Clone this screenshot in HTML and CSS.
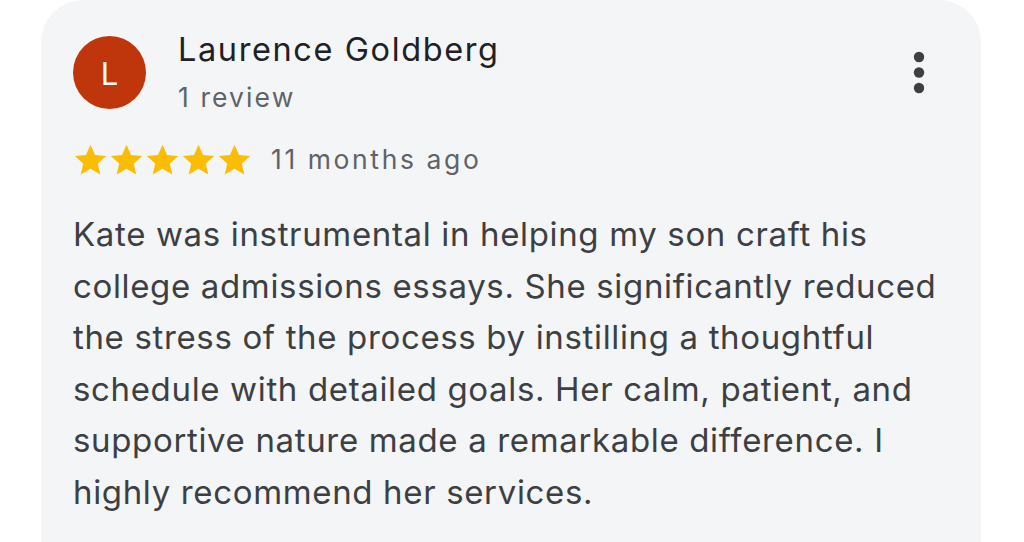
FILE: index.html
```html
<!DOCTYPE html>
<html>
<head>
<meta charset="utf-8">
<link rel="stylesheet" href="styles.css">
</head>
<body>
<div class="card">
  <div class="head">
    <div class="avatar">L</div>
    <div class="who">
      <div class="name">Laurence Goldberg</div>
      <div class="count">1 review</div>
    </div>
    <svg class="more" width="12" height="44" viewBox="0 0 12 44"><circle cx="6" cy="6" r="5.2" fill="#3c4043"/><circle cx="6" cy="21.5" r="5.2" fill="#3c4043"/><circle cx="6" cy="37" r="5.2" fill="#3c4043"/></svg>
  </div>
  <div class="rating">
    <div class="stars">
      <svg viewBox="0 0 24 24"><path d="M12 1.8l3.1 7.1 7.7.7-5.8 5.1 1.7 7.6L12 18.3l-6.7 4 1.7-7.6-5.8-5.1 7.7-.7z" fill="#fbbc04"/></svg>
      <svg viewBox="0 0 24 24"><path d="M12 1.8l3.1 7.1 7.7.7-5.8 5.1 1.7 7.6L12 18.3l-6.7 4 1.7-7.6-5.8-5.1 7.7-.7z" fill="#fbbc04"/></svg>
      <svg viewBox="0 0 24 24"><path d="M12 1.8l3.1 7.1 7.7.7-5.8 5.1 1.7 7.6L12 18.3l-6.7 4 1.7-7.6-5.8-5.1 7.7-.7z" fill="#fbbc04"/></svg>
      <svg viewBox="0 0 24 24"><path d="M12 1.8l3.1 7.1 7.7.7-5.8 5.1 1.7 7.6L12 18.3l-6.7 4 1.7-7.6-5.8-5.1 7.7-.7z" fill="#fbbc04"/></svg>
      <svg viewBox="0 0 24 24"><path d="M12 1.8l3.1 7.1 7.7.7-5.8 5.1 1.7 7.6L12 18.3l-6.7 4 1.7-7.6-5.8-5.1 7.7-.7z" fill="#fbbc04"/></svg>
    </div>
    <span class="when">11 months ago</span>
  </div>
  <p class="text">Kate was instrumental in helping my son craft his college admissions essays. She significantly reduced the stress of the process by instilling a thoughtful schedule with detailed goals. Her calm, patient, and supportive nature made a remarkable difference. I highly recommend her services.</p>
</div>
</body>
</html>
```
FILE: styles.css
```css
html, body {
  margin: 0;
  padding: 0;
  background: #ffffff;
  height: 542px;
  overflow: hidden;
}
body {
  font-family: Inter, "Liberation Sans", Arial, sans-serif;
  padding: 0 43px 0 41px;
}
.card {
  background: #f4f5f7;
  border-radius: 42px 42px 0 0;
  height: 542px;
  padding: 35px 32px 0 32px;
  box-sizing: border-box;
}
.head {
  display: flex;
  align-items: flex-start;
}
.avatar {
  width: 73px;
  height: 73px;
  border-radius: 50%;
  background: #bf360c;
  color: #fff;
  font-size: 31px;
  padding-top: 2px;
  box-sizing: border-box;
  display: flex;
  align-items: center;
  justify-content: center;
  flex: none;
  margin-top: 1px;
}
.who {
  margin-left: 32px;
  flex: 1;
}
.name {
  font-size: 32.5px;
  letter-spacing: 1.6px;
  color: #202124;
  line-height: 36px;
  margin-top: -3px;
}
.count {
  font-size: 26.5px;
  letter-spacing: 2.1px;
  color: #5f6368;
  line-height: 30px;
  margin-top: 14px;
}
.more {
  margin: 16px 24px 0 0;
}
.rating {
  display: flex;
  align-items: center;
  margin-top: 30px;
  height: 34px;
}
.stars {
  display: flex;
  gap: 1px;
}
.stars svg {
  width: 35px;
  height: 35px;
  display: block;
}
.when {
  font-size: 26.5px;
  letter-spacing: 2.6px;
  color: #5f6368;
  margin-left: 19px;
}
.text {
  margin: 33px 0 0 0;
  font-size: 33px;
  letter-spacing: 0.65px;
  line-height: 51.5px;
  color: #3c4043;
  width: 885px;
}
```
